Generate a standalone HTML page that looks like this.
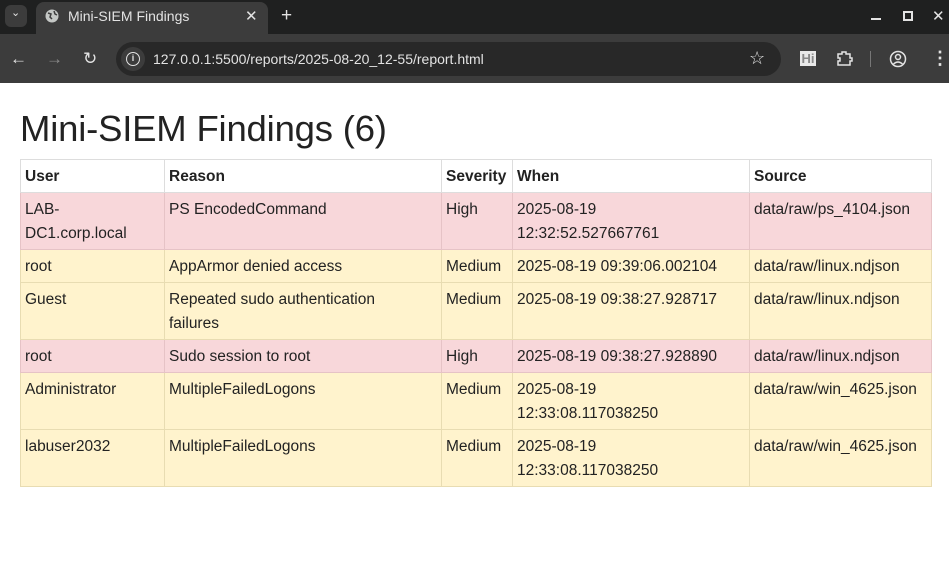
<!DOCTYPE html>
<html><head><meta charset="utf-8"><style>
*{margin:0;padding:0;box-sizing:border-box}
body{width:949px;height:562px;overflow:hidden;background:#fff;font-family:"Liberation Sans",sans-serif;position:relative}
.top{position:absolute;left:0;top:0;width:949px;height:34px;background:#1f2020}
.tb{position:absolute;left:0;top:34px;width:949px;height:49px;background:#3c3c3c}
.tab{position:absolute;left:36px;top:2px;width:232px;height:32px;background:#3c3c3c;border-radius:8px 8px 0 0}
.url{position:absolute;left:116px;top:42px;width:665px;height:34px;background:#282828;border-radius:17px}
.w{color:#e3e3e3;position:absolute;font-size:14px}
h1{position:absolute;left:20px;top:108px;font-weight:normal;font-size:36.5px;color:#222;letter-spacing:-0.2px}
table{position:absolute;left:20px;top:159px;border-collapse:collapse;table-layout:fixed;width:911px;font-size:15.5px;color:#222}
td,th{border:1px solid #ddd;padding:5px 4px 3px 4px;line-height:24px;vertical-align:top;text-align:left;white-space:nowrap;overflow:hidden}
th{height:33px;background:#fff}
.h td{background:#f8d7da;border-color:#e6c3c6}
.m td{background:#fff3cd;border-color:#e8dcb2}
</style></head><body>
<div class="top"></div>
<div style="position:absolute;left:5px;top:5px;width:22px;height:22px;background:#3c3c3c;border-radius:6px"></div>
<div class="w" style="left:11px;top:6px;font-size:11px">⌄</div>
<div class="tab"></div>
<svg style="position:absolute;left:45px;top:9px" width="14" height="14"><circle cx="7" cy="7" r="6.5" fill="#c4c7c5"/><path d="M3 4 L6 5 L5 8 L7 10 M9 2 L10 5 L12 6" stroke="#3c3c3c" stroke-width="1.5" fill="none"/></svg>
<div class="w" style="left:68px;top:8px">Mini-SIEM Findings</div>
<div class="w" style="left:245px;top:7px;font-size:15px">✕</div>
<div class="w" style="left:281px;top:5px;font-size:19px">+</div>
<div style="position:absolute;left:871px;top:18px;width:10px;height:2px;background:#e3e3e3"></div>
<div style="position:absolute;left:903px;top:11px;width:10px;height:10px;border:2px solid #e3e3e3"></div>
<div class="w" style="left:932px;top:7px;font-size:15px">✕</div>
<div class="tb"></div>
<div class="w" style="left:10px;top:49px;font-size:17px">←</div>
<div class="w" style="left:46px;top:49px;font-size:17px;color:#8a8a8a">→</div>
<div class="w" style="left:83px;top:49px;font-size:17px">↻</div>
<div class="url"></div>
<div style="position:absolute;left:121px;top:47px;width:24px;height:24px;background:#3c3c3c;border-radius:12px"></div>
<div style="position:absolute;left:126px;top:52px;width:14px;height:14px;border:1.5px solid #e3e3e3;border-radius:7px;color:#e3e3e3;font-size:9px;text-align:center;line-height:11px;font-weight:bold">i</div>
<div class="w" style="left:153px;top:51px">127.0.0.1:5500/reports/2025-08-20_12-55/report.html</div>
<div class="w" style="left:749px;top:48px;font-size:18px">☆</div>
<div style="position:absolute;left:800px;top:51px;width:16px;height:15px;background:#e8e8e8;color:#888;font-size:13px;font-weight:bold;line-height:15px;text-align:center">Hi</div>
<svg style="position:absolute;left:836px;top:50px" width="18" height="18"><path d="M2 4 H6 V2 H10 V4 H14 V8 H16 V11 H14 V15 H2 V11 H4 V8 H2 Z" stroke="#e3e3e3" stroke-width="1.5" fill="none"/></svg>
<div style="position:absolute;left:870px;top:51px;width:1px;height:16px;background:#777"></div>
<svg style="position:absolute;left:889px;top:50px" width="18" height="18"><circle cx="9" cy="9" r="7.5" stroke="#e3e3e3" stroke-width="1.5" fill="none"/><circle cx="9" cy="7" r="2.5" stroke="#e3e3e3" stroke-width="1.5" fill="none"/><path d="M4.5 14 Q9 10 13.5 14" stroke="#e3e3e3" stroke-width="1.5" fill="none"/></svg>
<div class="w" style="left:931px;top:48px;font-size:18px;font-weight:bold">⋮</div>
<h1>Mini-SIEM Findings (6)</h1>
<table>
<colgroup><col style="width:144px"><col style="width:277px"><col style="width:71px"><col style="width:237px"><col style="width:182px"></colgroup>
<tr><th>User</th><th>Reason</th><th>Severity</th><th>When</th><th>Source</th></tr>
<tr class="h"><td>LAB-<br>DC1.corp.local</td><td>PS EncodedCommand</td><td>High</td><td>2025-08-19<br>12:32:52.527667761</td><td>data/raw/ps_4104.json</td></tr>
<tr class="m"><td>root</td><td>AppArmor denied access</td><td>Medium</td><td>2025-08-19 09:39:06.002104</td><td>data/raw/linux.ndjson</td></tr>
<tr class="m"><td>Guest</td><td>Repeated sudo authentication<br>failures</td><td>Medium</td><td>2025-08-19 09:38:27.928717</td><td>data/raw/linux.ndjson</td></tr>
<tr class="h"><td>root</td><td>Sudo session to root</td><td>High</td><td>2025-08-19 09:38:27.928890</td><td>data/raw/linux.ndjson</td></tr>
<tr class="m"><td>Administrator</td><td>MultipleFailedLogons</td><td>Medium</td><td>2025-08-19<br>12:33:08.117038250</td><td>data/raw/win_4625.json</td></tr>
<tr class="m"><td>labuser2032</td><td>MultipleFailedLogons</td><td>Medium</td><td>2025-08-19<br>12:33:08.117038250</td><td>data/raw/win_4625.json</td></tr>
</table>
</body></html>
